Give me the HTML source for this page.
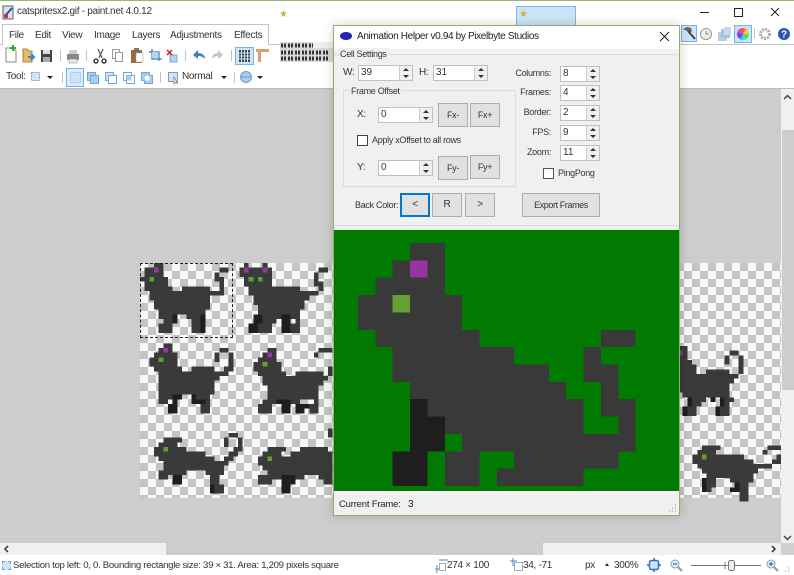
<!DOCTYPE html>
<html><head><meta charset="utf-8"><style>
html,body{margin:0;padding:0}
body{width:794px;height:575px;overflow:hidden;position:relative;background:#fff;font:10px "Liberation Sans",sans-serif;color:#222}
.a{position:absolute;box-sizing:border-box}
.t{position:absolute;white-space:nowrap;line-height:12px;color:#333;letter-spacing:-.3px}
.d{font-size:9px;letter-spacing:-.3px}
.in{position:absolute;box-sizing:border-box;background:#fff;border:1px solid #c0c0c0;color:#333;line-height:13px;padding-left:2px;font-size:10px}
.in i{position:absolute;right:0;top:0;bottom:0;width:12px;background:#f0f0f0;border-left:1px solid #ccc}
.in i:before,.in i:after{content:"";position:absolute;left:3px;border-left:3px solid transparent;border-right:3px solid transparent}
.in i:before{top:2px;border-bottom:3px solid #333}
.in i:after{bottom:2px;border-top:3px solid #333}
.b{position:absolute;box-sizing:border-box;background:#e1e1e1;border:1px solid #adadad;color:#333;text-align:center;font-size:9px;letter-spacing:-.3px}
.cb{position:absolute;box-sizing:border-box;width:11px;height:11px;background:#fff;border:1px solid #444}
.sep{position:absolute;width:1px;background:#b5c4d6}
.hl{position:absolute;box-sizing:border-box;background:#cde4f8;border:1px solid #74b3ee}
svg{position:absolute;display:block}
</style></head><body>

<div class="a" style="left:0;top:0;width:794px;height:1px;background:#98b47c"></div>

<!-- title bar -->
<svg style="left:2px;top:5px" width="13" height="15" viewBox="0 0 13 15"><rect x="1" y="1" width="10" height="13" fill="#d6e4f4" stroke="#566"/><path d="M3 11L10 3" stroke="#2b4fb0" stroke-width="2"/><rect x="2" y="9" width="4" height="4" fill="#c33"/></svg>
<div class="t" style="left:17px;top:6px;letter-spacing:-.28px">catspritesx2.gif - paint.net 4.0.12</div>
<div class="t" style="left:279px;top:9px;color:#c9b53c;font-size:10px">★</div>
<div class="a" style="left:516px;top:6px;width:60px;height:20px;background:#cce4f7;border:1px solid #7eb4ea"></div>
<div class="t" style="left:519px;top:9px;color:#c9b53c;font-size:10px">★</div>
<svg style="left:695px;top:4px" width="92" height="16" viewBox="0 0 92 16" fill="none" stroke="#222"><path d="M5 8.500H14"/><rect x="39.500" y="4.500" width="8" height="8" stroke-width="1"/><path d="M76 4L84 12M84 4L76 12"/></svg>

<!-- menu tab -->
<div class="a" style="left:0;top:44px;width:794px;height:1px;background:#c4c4c4"></div>
<div class="a" style="left:2px;top:24px;width:267px;height:21px;background:#fff;border:1px solid #c4c4c4;border-bottom:0"></div>
<div class="t" style="left:9px;top:30px">File</div>
<div class="t" style="left:35px;top:30px">Edit</div>
<div class="t" style="left:62px;top:30px">View</div>
<div class="t" style="left:94px;top:30px">Image</div>
<div class="t" style="left:132px;top:30px">Layers</div>
<div class="t" style="left:170px;top:30px">Adjustments</div>
<div class="t" style="left:234px;top:30px">Effects</div>

<!-- toolbar row 1 -->
<svg style="left:0;top:44px" width="280" height="24" viewBox="0 0 280 24">
<path d="M6 4h7l3 3v11H6z" fill="#fff" stroke="#8a8a8a"/><path d="M13 1v6M10 4h6" stroke="#3ca33c" stroke-width="2"/>
<path d="M23 5h4l2 2h3v11h-9z" fill="#e4bd62" stroke="#a8843a"/><path d="M28 13h6M31 10l3 3-3 3" stroke="#3b82c8" stroke-width="2" fill="none"/>
<rect x="41" y="6" width="11" height="12" fill="#444"/><rect x="43" y="6" width="7" height="4" fill="#ddd"/><rect x="43" y="13" width="7" height="5" fill="#aaa"/>
<rect x="67" y="10" width="12" height="6" fill="#888"/><rect x="69" y="6" width="8" height="4" fill="#ccc"/><rect x="69" y="15" width="8" height="4" fill="#e8e8e8" stroke="#888" stroke-width=".5"/>
<path d="M98 5l4 9M103 5l-4 9" stroke="#555" stroke-width="1.2"/><circle cx="96" cy="17" r="2" fill="none" stroke="#222" stroke-width="1.300"/><circle cx="104" cy="17" r="2" fill="none" stroke="#222" stroke-width="1.300"/>
<rect x="112.500" y="5.500" width="7" height="9" fill="#fff" stroke="#999"/><rect x="115.500" y="8.500" width="7" height="9" fill="#fff" stroke="#999"/>
<rect x="131" y="6" width="11" height="13" fill="#9a6b3a"/><rect x="134" y="4" width="5" height="3" fill="#777"/><rect x="136" y="9" width="7" height="9" fill="#fff" stroke="#999" stroke-width=".5"/>
<path d="M149 8h10v9M152 5v10h10" stroke="#3d75b8" fill="none" stroke-width="1.200"/><rect x="152" y="8" width="6" height="6" fill="#b5d4f0"/>
<rect x="170" y="11" width="7" height="7" fill="#b5d4f0" stroke="#7aa7d0"/><path d="M167 6l5 5M172 6l-5 5" stroke="#c22" stroke-width="1.500"/>
<path d="M193 11l5-5v3c4 0 7 2 7 6-2-2-4-3-7-3v3z" fill="#3f7fc1"/>
<path d="M223 11l-5-5v3c-4 0-6 2-6 6 2-2 3-3 6-3v3z" fill="#c4c4c4"/>
</svg>
<div class="sep" style="left:60px;top:50px;height:11px"></div>
<div class="sep" style="left:86px;top:50px;height:11px"></div>
<div class="sep" style="left:185px;top:50px;height:11px"></div>
<div class="sep" style="left:231px;top:50px;height:11px"></div>
<div class="hl" style="left:235px;top:47px;width:19px;height:18px"></div>
<svg style="left:239px;top:50px" width="11" height="12" viewBox="0 0 11 12"><rect width="11" height="12" fill="#444"/><path d="M2.500 0v12M5.500 0v12M8.500 0v12M0 3h11M0 6h11M0 9h11" stroke="#cde4f8"/></svg>
<svg style="left:256px;top:48px" width="13" height="14" viewBox="0 0 13 14"><path d="M0 1h13v3H5v10H2V4H0z" fill="#dca064"/></svg>

<!-- thumbnail -->
<svg style="left:280px;top:42px" width="54" height="20" viewBox="0 0 54 20"><rect width="54" height="20" fill="#d8d8d8"/><path d="M1 3.500h5M8 3.500h5M15 3.500h5M22 3.500h5M29 3.500h4M1 10.500h5M8 10.500h5M15 10.500h5M22 10.500h5M29 10.500h5M36 10.500h5M43 10.500h5M1 16.500h5M8 16.500h5M15 16.500h5M22 16.500h5M29 16.500h5M36 16.500h5M43 16.500h5" stroke="#333" stroke-width="4" stroke-dasharray="2 1"/><rect x="33" y="0" width="21" height="6" fill="#eee"/></svg>

<!-- toolbar row 2 -->
<div class="t" style="left:6px;top:71px">Tool:</div>
<svg style="left:0;top:66px" width="280" height="22" viewBox="0 0 280 22">
<rect x="31.500" y="6.500" width="8" height="8" fill="#cfe4f8" stroke="#6ea6dc" stroke-dasharray="2 1"/>
<path d="M47 10h6l-3 3z" fill="#222"/>
<rect x="70.500" y="6.500" width="10" height="10" fill="#cfe4f8" stroke="#6ea6dc"/>
<rect x="87.500" y="6.500" width="8" height="8" fill="#a9cdef" stroke="#6ea6dc"/><rect x="90.500" y="9.500" width="8" height="8" fill="#a9cdef" stroke="#6ea6dc"/>
<rect x="105.500" y="6.500" width="8" height="8" fill="#cfe4f8" stroke="#6ea6dc"/><rect x="108.500" y="9.500" width="8" height="8" fill="#fff" stroke="#6ea6dc"/>
<rect x="123.500" y="6.500" width="8" height="8" fill="#fff" stroke="#6ea6dc"/><rect x="126.500" y="9.500" width="8" height="8" fill="#fff" stroke="#6ea6dc"/><rect x="126.500" y="9.500" width="5" height="5" fill="#a9cdef"/>
<rect x="141.500" y="6.500" width="8" height="8" fill="#a9cdef" stroke="#6ea6dc"/><rect x="144.500" y="9.500" width="8" height="8" fill="#a9cdef" stroke="#6ea6dc"/><rect x="144.500" y="9.500" width="5" height="5" fill="#fff"/>
<rect x="168.500" y="6.500" width="9" height="9" fill="#cfe4f8" stroke="#7a9cc0"/><path d="M174 11v7l2-2 2 2z" fill="#fff" stroke="#777" stroke-width=".7"/>
<path d="M221 10h6l-3 3z" fill="#222"/>
<circle cx="246" cy="11" r="5.500" fill="#a9cdef" stroke="#7a9cc0"/><path d="M240 11h12" stroke="#7a9cc0"/>
<path d="M257 10h6l-3 3z" fill="#222"/>
</svg>
<div class="sep" style="left:62px;top:72px;height:11px"></div>
<div class="sep" style="left:160px;top:72px;height:11px"></div>
<div class="sep" style="left:234px;top:72px;height:11px"></div>
<div class="a" style="left:66px;top:68px;width:18px;height:19px;border:1px solid #74b3ee;background:rgba(205,228,248,.7)"></div>
<div class="t" style="left:182px;top:71px">Normal</div>

<!-- right tools -->
<div class="hl" style="left:681px;top:25px;width:16px;height:17px"></div>
<svg style="left:682px;top:26px" width="112" height="16" viewBox="0 0 112 16">
<path d="M1 3l4-2 4 1 1 3-2 2-3-2z" fill="#666"/><path d="M6 5l7 8" stroke="#444" stroke-width="2"/>
<circle cx="24" cy="8" r="5.500" fill="#eee" stroke="#999"/><path d="M24 5v3h3" stroke="#888" fill="none"/>
<rect x="36" y="6" width="9" height="9" fill="#b7cfe6"/><rect x="39" y="3" width="9" height="9" fill="#a5c3e0"/><rect x="42" y="1" width="7" height="8" fill="#c7d9ea"/>
<circle cx="83" cy="8" r="4.500" fill="none" stroke="#aaa" stroke-width="3" stroke-dasharray="2 1"/>
<circle cx="102" cy="8" r="6" fill="#2c55b0"/><text x="102" y="11.500" font-size="10" font-weight="bold" fill="#fff" text-anchor="middle" font-family="Liberation Sans">?</text>
</svg>
<div class="hl" style="left:734px;top:25px;width:18px;height:18px"></div>
<div class="a" style="left:737px;top:28px;width:12px;height:12px;border-radius:50%;background:conic-gradient(#f44,#fd4,#4d4,#4dd,#44f,#d4d,#f44)"></div>
<div class="sep" style="left:754px;top:28px;height:10px"></div>

<!-- workspace -->
<div class="a" style="left:0;top:88px;width:794px;height:455px;background:#cdcdcd;border-top:1px solid #bbb"></div>
<div class="a" style="left:140px;top:263px;width:641px;height:235px;background-color:#f8f8f8;background-image:conic-gradient(#c4c4c4 25%,#f8f8f8 0 50%,#c4c4c4 0 75%,#f8f8f8 0);background-size:16px 16px"></div>

<!-- cats: 1 unit = 1/3 px, origin (135,258); each sprite cell is 14 units -->
<svg style="left:135px;top:258px" width="659" height="250" viewBox="0 0 1977 750" shape-rendering="crispEdges" fill="none" stroke-width="1">
<g transform="translate(15,15) scale(14)">
<path stroke="#3a3a3a" d="M3 .5h2M1 1.500h4M17 1.500h2M1 2.500h4M16 2.500h1M0 3.500h6M16 3.500h2M1 4.500h5M17 4.500h1M1 5.500h6M9 5.500h6M17 5.500h1M2 6.500h16M2 7.500h13M3 8.500h12M3 9.500h12M4 10.500h10M4 11.500h3M10 11.500h3M5 12.500h2M11 12.500h2M4 13.500h3M11 13.500h2M4 14.500h3M11 14.500h2"/>
<path stroke="#1e1e1e" d="M7 11.500h1M13 11.500h1M7 12.500h1M13 12.500h1M13 13.500h1M13 14.500h1"/>
<path stroke="#95359f" d="M3 1.500h1"/><path stroke="#62a02e" d="M2 3.500h1"/>
</g>
<g transform="translate(313,15) scale(14)">
<path stroke="#3a3a3a" d="M1 .5h1M5 .5h1M0 1.500h7M17 1.500h2M0 2.500h7M16 2.500h1M1 3.500h6M16 3.500h1M1 4.500h6M16 4.500h2M2 5.500h11M17 5.500h1M2 6.500h15M3 7.500h12M3 8.500h11M4 9.500h10M4 10.500h9M5 11.500h4M11 11.500h2M5 12.500h3M12 12.500h1M4 13.500h3M11 13.500h2M4 14.500h3M11 14.500h2"/>
<path stroke="#1e1e1e" d="M3 11.500h2M9 11.500h2M3 12.500h2M9 12.500h2M2 13.500h2M9 13.500h2M2 14.500h2M9 14.500h2"/>
<path stroke="#95359f" d="M1 1.500h1M5 1.500h1"/><path stroke="#62a02e" d="M2 3.500h1M4 3.500h1"/>
</g>
<g transform="translate(15,256) scale(14)">
<path stroke="#3a3a3a" d="M5 .5h2M4 1.500h3M17 1.500h2M3 2.500h5M16 2.500h1M19 2.500h1M2 3.500h6M16 3.500h1M19 3.500h1M2 4.500h6M19 4.500h1M3 5.500h6M11 5.500h5M18 5.500h2M4 6.500h15M4 7.500h13M4 8.500h12M4 9.500h12M4 10.500h12M4 11.500h3M12 11.500h3M4 12.500h2M14 12.500h1"/>
<path stroke="#1e1e1e" d="M7 11.500h2M11 11.500h1M7 12.500h1M11 12.500h1M12 12.500h2M6 13.500h2M6 14.500h2"/>
<path stroke="#3a3a3a" d="M13 13.500h2M13 14.500h2"/>
<path stroke="#95359f" d="M5 1.500h1"/><path stroke="#62a02e" d="M4 3.500h1"/>
</g>
<g transform="translate(313,256) scale(14)">
<path stroke="#3a3a3a" d="M6 1.500h2M17 1.500h3M5 2.500h3M16 2.500h1M4 3.500h4M3 4.500h6M3 5.500h6M19 5.500h1M4 6.500h6M12 6.500h6M19 6.500h1M5 7.500h14M5 8.500h13M6 9.500h11M6 10.500h11M6 11.500h11M5 12.500h3M11 12.500h2M16 12.500h1M4 13.500h3M15 13.500h2M4 14.500h3M15 14.500h2"/>
<path stroke="#1e1e1e" d="M8 12.500h3M9 13.500h2M12 13.500h3M9 14.500h2M12 14.500h2"/>
<path stroke="#95359f" d="M6 2.500h1"/><path stroke="#62a02e" d="M5 4.500h1"/>
</g>
<g transform="translate(15,511) scale(14)">
<path stroke="#3a3a3a" d="M19 1.500h2M5 2.500h4M18 2.500h1M21 2.500h1M4 3.500h4M18 3.500h1M21 3.500h1M3 4.500h7M20 4.500h2M3 5.500h11M19 5.500h2M4 6.500h12M18 6.500h2M5 7.500h14M5 8.500h13M4 9.500h5M14 9.500h4M4 10.500h2M15 10.500h2M15 11.500h2M16 12.500h2M16 13.500h2"/>
<path stroke="#3a3a3a" d="M9 9.500h1"/>
<path stroke="#1e1e1e" d="M7 10.500h2M7 11.500h2M15 12.500h1M15 13.500h1"/>
<path stroke="#62a02e" d="M5 4.500h1"/>
</g>
<g transform="translate(313,511) scale(14)">
<path stroke="#3a3a3a" d="M19 0.500h1M19 1.500h1M6 4.500h4M13 4.500h6M5 5.500h4M11 5.500h9M4 6.500h16M4 7.500h16M5 8.500h15M6 9.500h14M4 10.500h5M12 10.500h2M17 10.500h3M4 11.500h3M18 11.500h2"/>
<path stroke="#1e1e1e" d="M9 10.500h3M9 11.500h3M9 12.500h2M9 13.500h2"/>
<path stroke="#62a02e" d="M6 6.500h1"/>
</g>
<g transform="translate(1629,264) scale(14)">
<path stroke="#3a3a3a" d="M0 .5h2M0 1.500h2M11 1.500h2M0 2.500h2M10 2.500h1M13 2.500h1M0 3.500h3M10 3.500h1M13 3.500h1M0 4.500h4M13 4.500h1M0 5.500h4M6 5.500h5M13 5.500h1M0 6.500h13M0 7.500h12M0 8.500h11M0 9.500h11M1 10.500h10M3 11.500h3M10 11.500h2M3 12.500h2M10 12.500h1M2 13.500h2M9 13.500h2M2 14.500h2M9 14.500h2"/>
<path stroke="#1e1e1e" d="M2 11.500h1M7 11.500h1M9 11.500h1M2 12.500h1M9 12.500h1M1 13.500h1M8 13.500h1M1 14.500h1M8 14.500h1"/>
<path stroke="#95359f" d="M0 1.500h1"/>
</g>
<g transform="translate(1673,562) scale(14)">
<path stroke="#3a3a3a" d="M2 .5h4M16 .5h3M1 1.500h4M15 1.500h1M0 2.500h11M18 2.500h1M0 3.500h13M17 3.500h2M1 4.500h16M2 5.500h12M3 6.500h10M3 7.500h2M8 7.500h5M3 8.500h2M10 8.500h2M3 9.500h1M10 9.500h2M10 10.500h2M10 11.500h2"/>
<path stroke="#1e1e1e" d="M2 7.500h1M2 8.500h1M2 9.500h1M9 8.500h1M8 9.500h2"/>
<path stroke="#62a02e" d="M2 2.500h1"/>
</g>
</svg>

<!-- selection -->
<div class="a" style="left:140px;top:263px;width:93px;height:75px;border:1px dashed #222"></div>

<!-- scrollbars -->
<div class="a" style="left:781px;top:89px;width:13px;height:454px;background:#f0f0f0"></div>
<div class="a" style="left:782px;top:130px;width:12px;height:260px;background:#cdcdcd"></div>
<svg style="left:781px;top:92px" width="13" height="10" viewBox="0 0 13 10"><path d="M3 7l3.500-3.500L10 7" fill="none" stroke="#444" stroke-width="1.500"/></svg>
<svg style="left:781px;top:533px" width="13" height="10" viewBox="0 0 13 10"><path d="M3 3l3.500 3.500L10 3" fill="none" stroke="#444" stroke-width="1.500"/></svg>
<div class="a" style="left:0;top:543px;width:781px;height:12px;background:#f0f0f0"></div>
<div class="a" style="left:166px;top:543px;width:377px;height:12px;background:#cdcdcd"></div>
<div class="a" style="left:781px;top:543px;width:13px;height:12px;background:#cfcfcf"></div>
<svg style="left:2px;top:544px" width="10" height="10" viewBox="0 0 10 10"><path d="M6 2L3 5l3 3" fill="none" stroke="#333" stroke-width="1.500"/></svg>
<svg style="left:769px;top:544px" width="10" height="10" viewBox="0 0 10 10"><path d="M3 2l3 3-3 3" fill="none" stroke="#333" stroke-width="1.500"/></svg>

<!-- status bar -->
<div class="a" style="left:0;top:555px;width:794px;height:20px;background:#fff"></div>
<div class="a" style="left:2px;top:561px;width:9px;height:9px;background:#cfe4f8;border:1px dashed #6ea6dc"></div>
<div class="t" style="left:13px;top:560px;font-size:9.600px">Selection top left: 0, 0. Bounding rectangle size: 39 × 31. Area: 1,209 pixels square</div>
<svg style="left:434px;top:557px" width="14" height="16" viewBox="0 0 14 16"><path d="M1 12h4M3 8v8M5 3h9" stroke="#3d88d0"/><rect x="5.500" y="6.500" width="6" height="7" fill="#fff" stroke="#aaa"/></svg>
<div class="t" style="left:447px;top:560px">274 × 100</div>
<svg style="left:510px;top:557px" width="14" height="16" viewBox="0 0 14 16"><path d="M3 1v8M0 4h7" stroke="#3d88d0"/><rect x="4.500" y="5.500" width="8" height="8" fill="#fff" stroke="#aaa"/></svg>
<div class="t" style="left:523px;top:560px">34, -71</div>
<div class="t" style="left:585px;top:560px">px</div>
<svg style="left:603px;top:562px" width="8" height="6" viewBox="0 0 8 6"><path d="M2 4h4L4 1z" fill="#222"/></svg>
<div class="t" style="left:614px;top:560px">300%</div>
<svg style="left:646px;top:557px" width="16" height="16" viewBox="0 0 16 16"><rect x="3.500" y="3.500" width="9" height="9" rx="2" fill="#cfe4f8" stroke="#2d6fc0" stroke-width="1.500"/><path d="M8 1v2M8 13v2M1 8h2M13 8h2" stroke="#2d6fc0" stroke-width="1.500"/></svg>
<svg style="left:668px;top:557px" width="126" height="17" viewBox="0 0 126 17"><circle cx="7" cy="7" r="4" fill="#dceaf7" stroke="#8aa"/><path d="M5 7h4" stroke="#446"/><path d="M10 10l4 4" stroke="#999" stroke-width="2"/>
<path d="M23 8.500h70M57 5v7" stroke="#777"/><rect x="60.500" y="3.500" width="6" height="10" rx="2" fill="#eee" stroke="#777"/>
<circle cx="103" cy="7" r="4" fill="#dceaf7" stroke="#8aa"/><path d="M101 7h4M103 5v4" stroke="#446"/><path d="M106 10l4 4" stroke="#999" stroke-width="2"/>
<path d="M120 14h1M117 14h1M120 11h1" stroke="#888"/></svg>

<!-- DIALOG -->
<div class="a" style="left:333px;top:25px;width:347px;height:491px;background:#f0f0f0;border:1px solid #8fb06d;box-shadow:0 0 10px rgba(0,0,0,.18)"></div>
<div class="a" style="left:334px;top:26px;width:345px;height:23px;background:#fff"></div>
<div class="a" style="left:340px;top:32px;width:12px;height:8px;border-radius:50%;background:#2422b8"></div>
<div class="t" style="left:357px;top:31px;color:#222;letter-spacing:-.35px">Animation Helper v0.94 by Pixelbyte Studios</div>
<svg style="left:659px;top:31px" width="11" height="11" viewBox="0 0 11 11"><path d="M1 1L10 10M10 1L1 10" stroke="#222"/></svg>

<div class="a" style="left:334px;top:54px;width:345px;height:1px;background:#dcdcdc"></div>
<div class="t d" style="left:340px;top:48px;background:#f0f0f0;padding-right:2px">Cell Settings</div>

<div class="t d" style="left:343px;top:67px;font-size:10px">W:</div>
<div class="in" style="left:358px;top:65px;width:55px;height:16px">39<i></i></div>
<div class="t d" style="left:419px;top:67px;font-size:10px">H:</div>
<div class="in" style="left:433px;top:65px;width:55px;height:16px">31<i></i></div>

<div class="a" style="left:343px;top:90px;width:173px;height:97px;border:1px solid #dcdcdc"></div>
<div class="t d" style="left:350px;top:85px;background:#f0f0f0;padding:0 1px">Frame Offset</div>

<div class="t d" style="left:357px;top:109px;font-size:10px">X:</div>
<div class="in" style="left:378px;top:107px;width:55px;height:16px">0<i></i></div>
<div class="b" style="left:438px;top:103px;width:30px;height:24px;line-height:22px">Fx-</div>
<div class="b" style="left:470px;top:103px;width:30px;height:24px;line-height:22px">Fx+</div>

<div class="cb" style="left:357px;top:135px"></div>
<div class="t d" style="left:372px;top:134px">Apply xOffset to all rows</div>

<div class="t d" style="left:357px;top:162px;font-size:10px">Y:</div>
<div class="in" style="left:378px;top:160px;width:55px;height:16px">0<i></i></div>
<div class="b" style="left:438px;top:156px;width:30px;height:24px;line-height:22px">Fy-</div>
<div class="b" style="left:470px;top:155px;width:30px;height:24px;line-height:22px">Fy+</div>

<div class="t d" style="left:355px;top:199px">Back Color:</div>
<div class="b" style="left:400px;top:193px;width:30px;height:24px;line-height:20px;border:2px solid #0078d7;font-size:10px">&lt;</div>
<div class="b" style="left:432px;top:193px;width:30px;height:24px;line-height:22px;font-size:10px">R</div>
<div class="b" style="left:465px;top:193px;width:30px;height:24px;line-height:22px;font-size:10px">&gt;</div>
<div class="b" style="left:522px;top:193px;width:78px;height:24px;line-height:22px;letter-spacing:-.4px">Export Frames</div>

<div class="t d" style="right:243px;top:67px">Columns:</div>
<div class="t d" style="right:243px;top:86px">Frames:</div>
<div class="t d" style="right:243px;top:106px">Border:</div>
<div class="t d" style="right:243px;top:126px">FPS:</div>
<div class="t d" style="right:243px;top:146px">Zoom:</div>
<div class="in" style="left:560px;top:66px;width:40px;height:16px">8<i></i></div>
<div class="in" style="left:560px;top:85px;width:40px;height:16px">4<i></i></div>
<div class="in" style="left:560px;top:105px;width:40px;height:16px">2<i></i></div>
<div class="in" style="left:560px;top:125px;width:40px;height:16px">9<i></i></div>
<div class="in" style="left:560px;top:145px;width:40px;height:16px">11<i></i></div>
<div class="cb" style="left:543px;top:168px;border-color:#555"></div>
<div class="t d" style="left:558px;top:167px">PingPong</div>

<div class="a" style="left:334px;top:225px;width:345px;height:1px;background:#dcdcdc"></div>

<!-- preview -->
<div class="a" style="left:334px;top:230px;width:345px;height:261px;background:#007a00"></div>
<svg style="left:358px;top:243px" width="295" height="243" viewBox="0 0 17 14" shape-rendering="crispEdges" fill="none" stroke-width="1">
<path stroke="#393939" d="M3 .5h2M2 1.500h3M1 2.500h4M0 3.500h6M0 4.500h6M1 5.500h6M14 5.500h2M2 6.500h7M13 6.500h1M2 7.500h9M13 7.500h2M3 8.500h9M14 8.500h1M4 9.500h9M14 9.500h2M5 10.500h8M15 10.500h1M6 11.500h10M5 12.500h2M9 12.500h6M5 13.500h2M8 13.500h5"/>
<path stroke="#1e1e1e" d="M3 9.500h1M3 10.500h2M3 11.500h2M2 12.500h2M2 13.500h2"/>
<path stroke="#95359f" d="M3 1.500h1"/>
<path stroke="#669f33" d="M2 3.500h1"/>
</svg>

<!-- dialog status -->
<div class="a" style="left:334px;top:491px;width:345px;height:24px;background:#f0f0f0;border-top:2px solid #fafafa"></div>
<div class="t" style="left:339px;top:499px;color:#222;font-size:9.500px;letter-spacing:-.2px">Current Frame:</div>
<div class="t" style="left:408px;top:499px;color:#222">3</div>
<svg style="left:665px;top:504px" width="12" height="10" viewBox="0 0 12 10"><path d="M10 1h1M7 4h1M10 4h1M4 7h1M7 7h1M10 7h1" stroke="#999"/></svg>

</body></html>
